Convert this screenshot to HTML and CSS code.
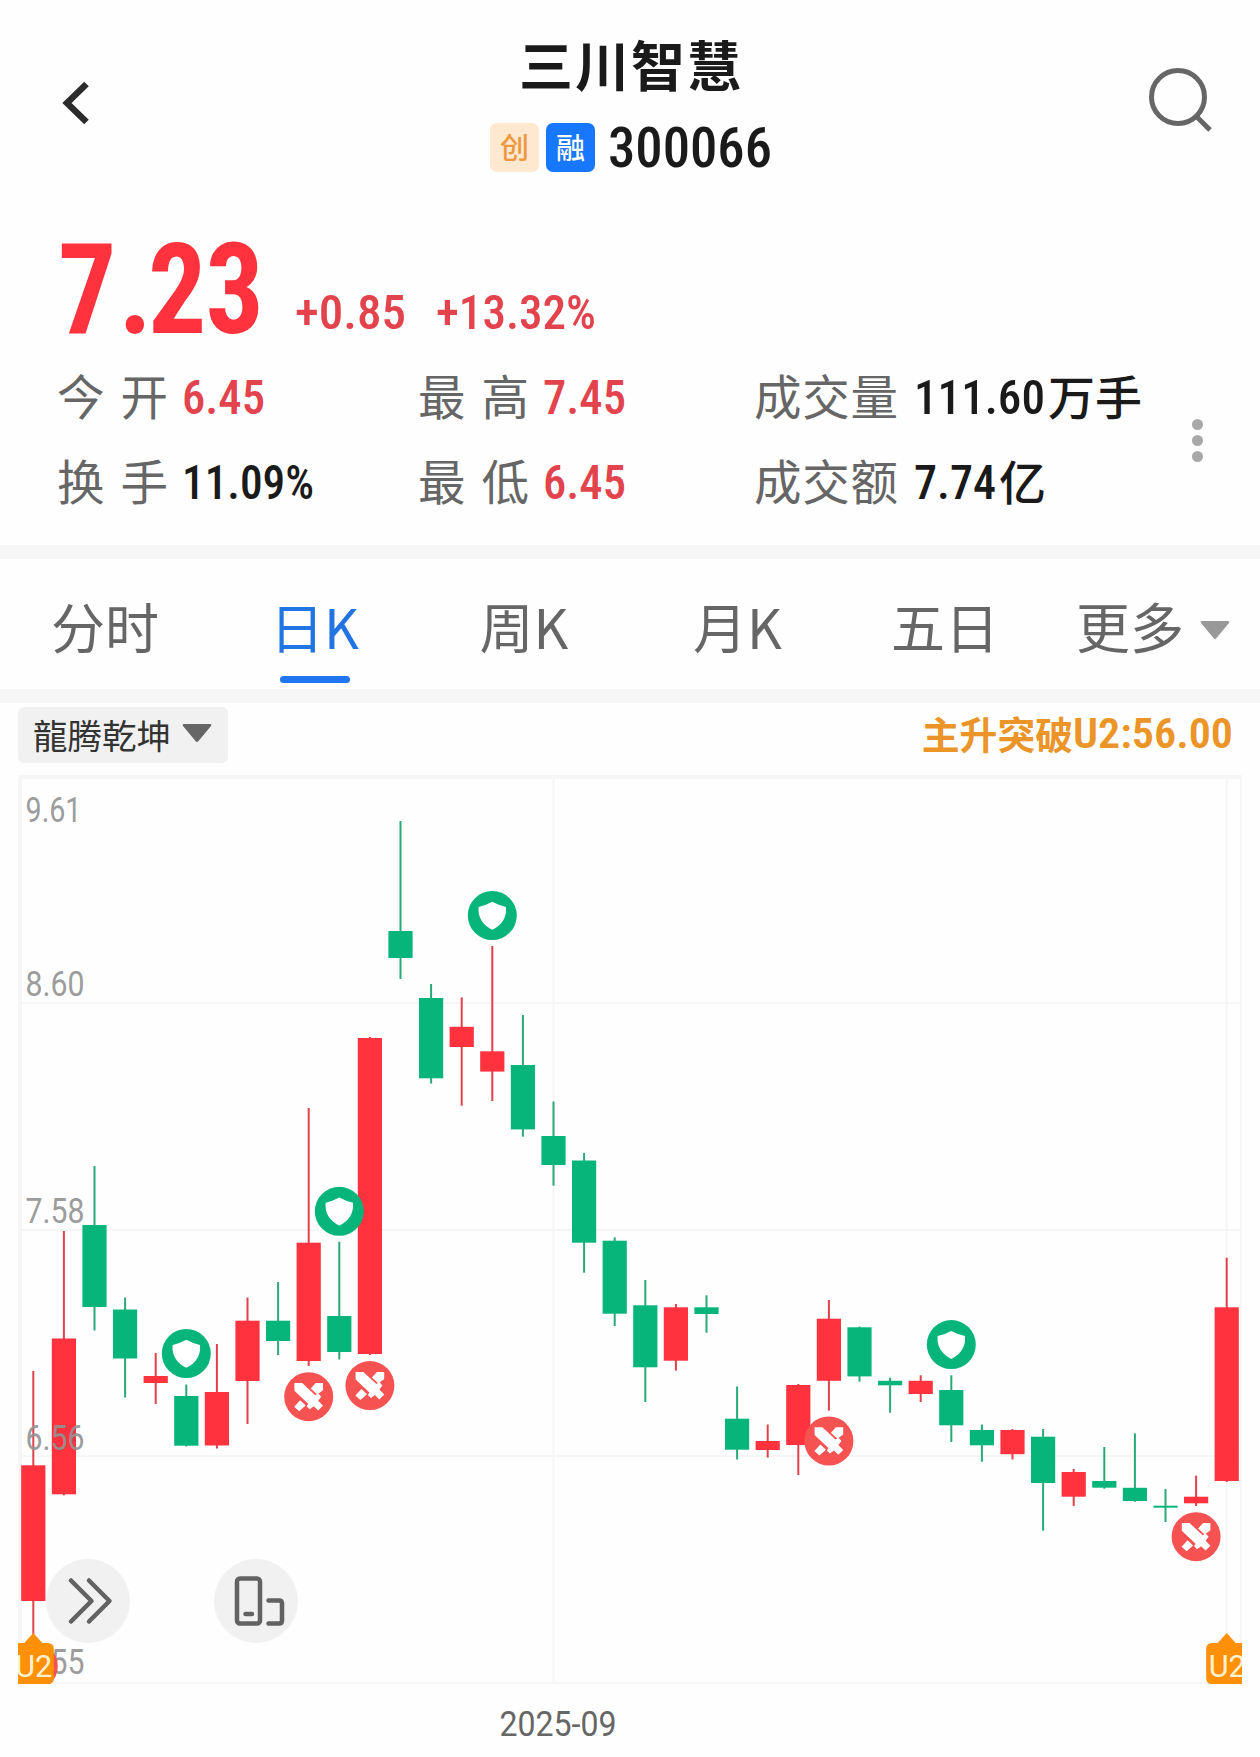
FILE: index.html
```html
<!DOCTYPE html>
<html lang="zh-CN">
<head>
<meta charset="utf-8">
<title>三川智慧 300066</title>
<link rel="stylesheet" href="styles.css">
</head>
<body>
<header class="header">
  <svg class="back" width="30" height="44" viewBox="0 0 30 44"><path d="M25.500 3L6 22l19.500 19" fill="none" stroke="#2b2b2b" stroke-width="6.500"/></svg>
  <div class="title">
    <h1 class="name">三川智慧</h1>
    <div class="code-row">
      <span class="badge badge-cy">创</span>
      <span class="badge badge-rz">融</span>
      <svg class="num code" width="164" height="39"><text x="0" y="39" textLength="164" lengthAdjust="spacingAndGlyphs">300066</text></svg>
    </div>
  </div>
  <svg class="search" width="66" height="66" viewBox="0 0 66 66" fill="none" stroke="#666" stroke-width="5"><circle cx="30" cy="29" r="26.500"/><path d="M48 48l14 14"/></svg>
</header>

<section class="quote">
  <div class="price-row">
    <svg class="num price" width="203" height="90"><text x="-1.100 65.400 97.800 161" y="90">7.23</text></svg>
    <svg class="num change" width="112" height="35"><text x="0" y="35" textLength="111" lengthAdjust="spacingAndGlyphs">+0.85</text></svg>
    <svg class="num change" width="161" height="35"><text x="0" y="35" textLength="160" lengthAdjust="spacingAndGlyphs">+13.32%</text></svg>
  </div>
  <div class="stats">
    <div class="stat"><span class="label two">今开</span><svg class="num up" width="84" height="35"><text x="0" y="35" textLength="83" lengthAdjust="spacingAndGlyphs">6.45</text></svg></div>
    <div class="stat"><span class="label two">最高</span><svg class="num up" width="84" height="35"><text x="0" y="35" textLength="83" lengthAdjust="spacingAndGlyphs">7.45</text></svg></div>
    <div class="stat"><span class="label">成交量</span><svg class="num flat" width="131" height="35"><text x="0" y="35" textLength="131" lengthAdjust="spacingAndGlyphs">111.60</text></svg><span class="unit">万手</span></div>
    <div class="stat"><span class="label two">换手</span><svg class="num flat" width="132" height="35"><text x="0" y="35" textLength="132" lengthAdjust="spacingAndGlyphs">11.09%</text></svg></div>
    <div class="stat"><span class="label two">最低</span><svg class="num up" width="84" height="35"><text x="0" y="35" textLength="83" lengthAdjust="spacingAndGlyphs">6.45</text></svg></div>
    <div class="stat"><span class="label">成交额</span><svg class="num flat" width="82" height="35"><text x="0" y="35" textLength="82" lengthAdjust="spacingAndGlyphs">7.74</text></svg><span class="unit">亿</span></div>
  </div>
  <div class="more"><i></i><i></i><i></i></div>
</section>

<nav class="tabs">
  <span class="tab">分时</span>
  <span class="tab active">日K</span>
  <span class="tab">周K</span>
  <span class="tab">月K</span>
  <span class="tab">五日</span>
  <span class="tab tab-more">更多<svg width="30" height="19" viewBox="0 0 30 19"><path d="M1 2Q0 0 2 0H28Q30 0 29 2L16.500 17Q15 19 13.500 17Z" fill="#999"/></svg></span>
</nav>

<div class="toolbar">
  <span class="chip">龍腾乾坤<svg width="30" height="19" viewBox="0 0 30 19"><path d="M1 2Q0 0 2 0H28Q30 0 29 2L16.500 17Q15 19 13.500 17Z" fill="#666"/></svg></span>
  <span class="signal">主升突破<svg class="num" width="160" height="31"><text x="0" y="31" textLength="160" lengthAdjust="spacingAndGlyphs">U2:56.00</text></svg></span>
</div>

<main class="chart">
  <svg id="kline" width="1260" height="994" viewBox="0 763 1260 994">
    <defs>
      <clipPath id="plot"><rect x="18" y="775" width="1224" height="909"/></clipPath>
      <g id="shield"><circle r="24.500" fill="#07b57b"/><path d="M0-13.700Q6-10.300 13.700-8.500Q15 7 0 14.300Q-15 7-13.700-8.500Q-6-10.300 0-13.700Z" fill="#fff"/></g>
      <g id="swords"><circle r="24.500" fill="#f75252"/><g fill="#fff"><path d="M-14.300-13.700H-6.500L6.500-1.500L9.500-3.500L12.500 0L9.500 4L14.300 9L9.500 13.800L5 9.500L1 12.500L-2 9.500L-.500 7L-14.300-6Z"/><path d="M2-8.200L7-13.700H14.300V-6.500L8.500-2.200Z"/><path d="M-8.500 3.500L-3 8.700L-9.500 14.500L-14.500 10Z"/></g></g>
    </defs>
    <g fill="#f6f6f6">
      <rect x="18" y="775" width="1224" height="4"/><rect x="18" y="775" width="4" height="909"/>
      <rect x="1240" y="775" width="2" height="909"/><rect x="22" y="1002" width="1218" height="2"/>
      <rect x="22" y="1229" width="1218" height="2"/><rect x="22" y="1455" width="1218" height="2"/>
      <rect x="18" y="1682" width="1224" height="2"/><rect x="552.500" y="779" width="2" height="903"/>
      <rect x="1225.700" y="779" width="2" height="903"/>
    </g>
    <g id="candles"></g>
    <g class="axis">
      <text x="25.500" y="822" textLength="56" lengthAdjust="spacingAndGlyphs">9.61</text>
      <text x="25.500" y="996" textLength="59" lengthAdjust="spacingAndGlyphs">8.60</text>
      <text x="25.500" y="1223" textLength="59" lengthAdjust="spacingAndGlyphs">7.58</text>
      <text x="25.500" y="1450" textLength="59" lengthAdjust="spacingAndGlyphs">6.56</text>
      <text x="25.500" y="1674" textLength="59" lengthAdjust="spacingAndGlyphs">5.55</text>
    </g>
    <text class="date" x="499.500" y="1735.500" textLength="117" lengthAdjust="spacingAndGlyphs">2025-09</text>
    <g id="marks" clip-path="url(#plot)"></g>
    <g fill="none" stroke="#626262" stroke-width="4.500" stroke-linecap="round" stroke-linejoin="round">
      <circle cx="88" cy="1601" r="42" fill="#f1f1f1" stroke="none"/>
      <path d="M71 1580.500L91.500 1601L71 1621.500M89 1580.500L109.500 1601L89 1621.500"/>
      <circle cx="256" cy="1601" r="42" fill="#f1f1f1" stroke="none"/>
      <rect x="237" y="1578.500" width="23" height="45" rx="3"/>
      <path d="M245.500 1614H252M268.500 1600.500H279Q282 1600.500 282 1603.500V1620.500Q282 1623.500 279 1623.500H268.500"/>
    </g>
  </svg>
</main>
<script src="chart.js"></script>
</body>
</html>
```
FILE: styles.css
```css
* { box-sizing: border-box; }
body {
  margin: 0;
  width: 1260px;
  height: 1757px;
  overflow: hidden;
  background: #fefefe;
  color: #1a1a1a;
  font-family: "Noto Sans CJK SC", sans-serif;
}
svg { display: block; flex: none; }
.num { overflow: visible; font-family: Roboto, sans-serif; font-weight: 500; font-size: 49px; font-stretch: 80%; fill: currentColor; }

.header {
  display: flex;
  justify-content: space-between;
  height: 190px;
  padding: 0 46px 0 61px;
}
.back { margin-top: 81px; }
.search { margin-top: 68px; }
.title { padding: 34px 0 0 23px; display: flex; flex-direction: column; align-items: center; width: 320px; }
.name { margin: 0; font-size: 54px; line-height: 60px; font-weight: 700; letter-spacing: 2px; }
.code-row { display: flex; align-items: center; gap: 7px; margin-top: 29px; }
.badge { width: 49px; height: 49px; border-radius: 7px; font-size: 29px; line-height: 46px; text-align: center; font-weight: 500; }
.badge-cy { background: #ffe8d0; color: #eb9840; }
.badge-rz { background: #1777ff; color: #fff; }
.code { font-size: 55px; margin-left: 6px; }

.quote { position: relative; height: 355px; padding: 53px 57px 0; }
.price-row { display: flex; align-items: flex-end; height: 90px; color: #ff323e; }
.price { font-size: 127px; font-weight: 700; margin-left: 2px; }
.price text { transform: scaleX(.91); }
.change { color: #e2434c; margin: 0 0 4px 33px; }
.change + .change { margin-left: 29px; }
.stats { display: grid; grid-template-columns: 361px 336px 1fr; grid-template-rows: 85px 85px; margin-top: 21px; }
.stat { display: flex; align-items: center; white-space: nowrap; }
.label { width: 160px; font-size: 47.5px; line-height: 60px; letter-spacing: 0.8px; color: #666; margin-top: -3px; }
.label.two { width: 125px; letter-spacing: 16px; }
.unit { font-size: 47px; line-height: 60px; font-weight: 500; margin: -3px 0 0 3px; }
.up { color: #e2434c; }
.more { position: absolute; left: 1192px; top: 229px; display: grid; gap: 5px; }
.more i { width: 11px; height: 11px; border-radius: 50%; background: #a8a8a8; }

.tabs {
  display: grid;
  grid-template-columns: 210px 209px 210px 217px 198px 1fr;
  height: 158px;
  padding-top: 37px;
  border: solid #f6f6f6;
  border-width: 14px 0;
  font-size: 54px;
  line-height: 60px;
  color: #666;
}
.tab { display: flex; flex-direction: column; align-items: center; }
.tab.active { color: #2374e3; }
.tab.active::after { content: ""; width: 70px; height: 7px; border-radius: 4px; background: #1f76f0; margin-top: 20px; }
.tab-more { flex-direction: row; align-items: flex-start; gap: 16px; padding-left: 32px; }
.tab-more svg { margin-top: 25px; }

.toolbar { display: flex; justify-content: space-between; height: 60px; padding: 4px 27px 0 18px; }
.chip { display: flex; align-items: center; gap: 11px; width: 210px; height: 56px; padding: 0 0 3px 15px; border-radius: 6px; background: #f1f1f1; color: #333; font-size: 34.500px; line-height: 50px; }
.signal { display: flex; align-items: center; height: 51px; color: #eb9428; font-size: 37.8px; line-height: 50px; font-weight: 700; }
.signal .num { font-size: 43px; font-weight: 600; }

.axis, .date { font-family: Roboto, sans-serif; font-size: 35px; font-stretch: 90%; fill: #929292; }
.axis { fill-opacity: .93; }
.date { fill: #666; }
.flag { font-family: Roboto, sans-serif; font-size: 31px; fill: #fff1cf; }
```
FILE: chart.js
```js
const RED = '#ff323e', GREEN = '#07b57b';
// [direction, high, body top, body bottom, low] in chart units
const candles = [
  ['r',1371,1465.3,1601,1636],['r',1231,1338.5,1494.3,1495.3],['g',1166,1225,1307,1330.5],['g',1297.5,1309.5,1358.5,1397.5],
  ['r',1353,1376,1383,1404],['g',1384.5,1396,1445.7,1446.5],['r',1344,1392,1445.5,1448.5],['r',1297.5,1320.7,1381,1424],
  ['g',1282,1320.7,1341,1355],['r',1108,1242.7,1361,1366],['g',1241.7,1316,1352,1359.5],['r',1037,1038,1354,1355],
  ['g',821,931,958,979],['g',984,998,1078.3,1083.5],['r',997.4,1026.8,1047,1105.7],['r',946,1051.3,1071.6,1101],
  ['g',1015,1065,1129.4,1136.7],['g',1101.5,1136,1165,1185.7],['g',1153,1160.5,1242.7,1272.7],['g',1237.3,1240.7,1313.7,1326],
  ['g',1280,1305.3,1367.3,1402],['r',1304,1307.3,1360.7,1370.7],['g',1295.3,1307.3,1314,1332.7],['g',1386.5,1418.7,1449.7,1459.5],
  ['r',1424.5,1441,1450,1457.5],['r',1384,1385,1445,1475],['r',1300,1318.7,1380.8,1410.7],['g',1326.5,1327.3,1376.4,1381.7],
  ['g',1377.7,1380.8,1385.3,1412.7],['r',1375.3,1380.8,1394,1402],['g',1375.3,1390,1425.3,1442],['g',1424.5,1430,1445.3,1461.7],
  ['r',1429,1430,1454.2,1459.5],['g',1429,1436.7,1483,1530.7],['r',1469,1472,1496.7,1506],['g',1447,1481,1487.7,1488.7],
  ['g',1433.3,1487.8,1501,1501.8],['g',1489,1505.7,1507.7,1522],['r',1475.7,1496.7,1503.3,1506],['r',1257.7,1307.3,1481,1482]
];
const center = i => 33.3 + 30.6 * i;
let out = '';
candles.forEach(([dir, high, top, bottom, low], i) => {
  const x = center(i), color = dir === 'r' ? RED : GREEN, wick = dir === 'r' ? '#e2404b' : '#2aa978';
  out += `<rect x="${x - 1}" y="${high}" width="2" height="${low - high}" fill="${wick}"/>` +
    `<rect x="${x - 12.1}" y="${top}" width="24.2" height="${bottom - top}" fill="${color}"/>`;
});
document.getElementById('candles').innerHTML = out;

const marks = [
  ['shield', 5, 1353.5], ['shield', 10, 1211.3], ['shield', 15, 915.5], ['shield', 30, 1344.6],
  ['swords', 9, 1396.7], ['swords', 11, 1385.6], ['swords', 26, 1441], ['swords', 38, 1536.7], ['swords', 0, 1666]
];
out = marks.map(([id, i, y]) => `<use href="#${id}" x="${center(i)}" y="${y}"/>`).join('');
[0, 39].forEach(i => {
  const x = center(i);
  out += `<path d="M${x} 1633l9 10h5.500q6 0 6 6v29q0 6-6 6h-29q-6 0-6-6v-29q0-6 6-6h5.500z" fill="#ff9008"/>` +
    `<text class="flag" x="${x - 18}" y="1677" textLength="37" lengthAdjust="spacingAndGlyphs">U2</text>`;
});
document.getElementById('marks').innerHTML = out;
```
